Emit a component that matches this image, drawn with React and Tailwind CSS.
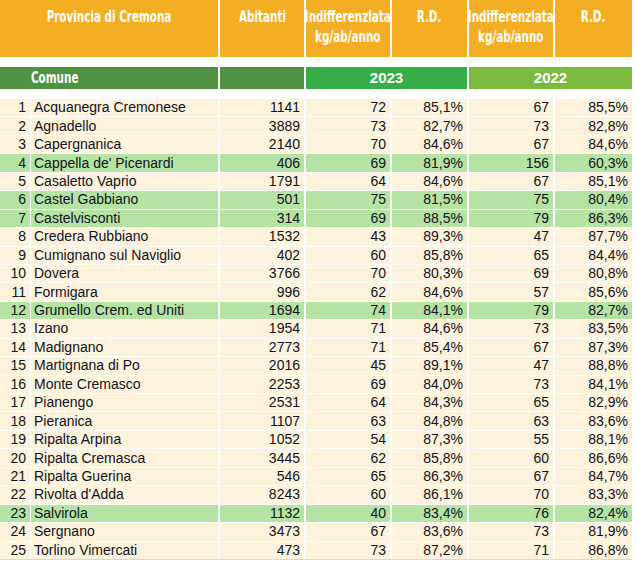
const ROWS = [
  [1, 'Acquanegra Cremonese', '1141', '72', '85,1%', '67', '85,5%'],
  [2, 'Agnadello', '3889', '73', '82,7%', '73', '82,8%'],
  [3, 'Capergnanica', '2140', '70', '84,6%', '67', '84,6%'],
  [4, "Cappella de' Picenardi", '406', '69', '81,9%', '156', '60,3%', true],
  [5, 'Casaletto Vaprio', '1791', '64', '84,6%', '67', '85,1%'],
  [6, 'Castel Gabbiano', '501', '75', '81,5%', '75', '80,4%', true],
  [7, 'Castelvisconti', '314', '69', '88,5%', '79', '86,3%', true],
  [8, 'Credera Rubbiano', '1532', '43', '89,3%', '47', '87,7%'],
  [9, 'Cumignano sul Naviglio', '402', '60', '85,8%', '65', '84,4%'],
  [10, 'Dovera', '3766', '70', '80,3%', '69', '80,8%'],
  [11, 'Formigara', '996', '62', '84,6%', '57', '85,6%'],
  [12, 'Grumello Crem. ed Uniti', '1694', '74', '84,1%', '79', '82,7%', true],
  [13, 'Izano', '1954', '71', '84,6%', '73', '83,5%'],
  [14, 'Madignano', '2773', '71', '85,4%', '67', '87,3%'],
  [15, 'Martignana di Po', '2016', '45', '89,1%', '47', '88,8%'],
  [16, 'Monte Cremasco', '2253', '69', '84,0%', '73', '84,1%'],
  [17, 'Pianengo', '2531', '64', '84,3%', '65', '82,9%'],
  [18, 'Pieranica', '1107', '63', '84,8%', '63', '83,6%'],
  [19, 'Ripalta Arpina', '1052', '54', '87,3%', '55', '88,1%'],
  [20, 'Ripalta Cremasca', '3445', '62', '85,8%', '60', '86,6%'],
  [21, 'Ripalta Guerina', '546', '65', '86,3%', '67', '84,7%'],
  [22, "Rivolta d'Adda", '8243', '60', '86,1%', '70', '83,3%'],
  [23, 'Salvirola', '1132', '40', '83,4%', '76', '82,4%', true],
  [24, 'Sergnano', '3473', '67', '83,6%', '73', '81,9%'],
  [25, 'Torlino Vimercati', '473', '73', '87,2%', '71', '86,8%'],
]

// no narrow face installed: squeeze the condensed bold a bit more
const narrow = "font-['Liberation_Sans_Narrow','DejaVu_Sans_Condensed',sans-serif] font-bold"

function HeadCell({ w, children }) {
  return (
    <div className={`${w} bg-[#f4ae24] text-white flex justify-center pt-[7px] text-[15px] leading-[20px] ${narrow}`}>
      <span className="inline-block text-center whitespace-nowrap scale-x-[0.77]">{children}</span>
    </div>
  )
}

function Row({ r }) {
  const [n, name, ab, i23, rd23, i22, rd22, hl] = r
  const bg = hl ? 'bg-[#b4e3a3]' : 'bg-[#fdf3dc]'
  const cell = `${bg} flex items-center justify-end pr-[4px]`
  return (
    <div className="flex h-[17.44px] gap-x-[2px]">
      <div className="flex w-[218px] gap-x-px">
        <div className={`${cell} w-[30px]`}>{n}</div>
        <div className={`${bg} flex items-center pl-[3px] flex-1 whitespace-nowrap`}>{name}</div>
      </div>
      <div className={`${cell} w-[84px]`}>{ab}</div>
      <div className={`${cell} w-[84px]`}>{i23}</div>
      <div className={`${cell} w-[75px]`}>{rd23}</div>
      <div className={`${cell} w-[84px]`}>{i22}</div>
      <div className={`${cell} w-[77px]`}>{rd22}</div>
    </div>
  )
}

export default function App() {
  return (
    <div className="w-[637px] h-[570px] bg-white overflow-hidden">
      <div className="w-[632px]">
        <div className="flex h-[57px] gap-x-[2px]">
          <HeadCell w="w-[218px]">Provincia di Cremona</HeadCell>
          <HeadCell w="w-[84px]">Abitanti</HeadCell>
          <HeadCell w="w-[84px]">Indifferenzlata<br />kg/ab/anno</HeadCell>
          <HeadCell w="w-[75px]">R.D.</HeadCell>
          <HeadCell w="w-[84px]">Indifferenzlata<br />kg/ab/anno</HeadCell>
          <HeadCell w="w-[77px]">R.D.</HeadCell>
        </div>

        <div className="flex h-[22px] mt-[10px] gap-x-[2px] text-white">
          <div className={`w-[218px] bg-[#4f9242] flex items-center pl-[31px] text-[15px] ${narrow}`}>
            <span className="inline-block origin-left scale-x-[0.77]">Comune</span>
          </div>
          <div className="w-[84px] bg-[#4f9242]" />
          <div className="w-[161px] bg-[#36ae48] flex items-center justify-center text-[15px] font-bold font-['Liberation_Sans',sans-serif]">2023</div>
          <div className="w-[163px] bg-[#7bba3e] flex items-center justify-center text-[15px] font-bold font-['Liberation_Sans',sans-serif]">2022</div>
        </div>

        <div className="mt-[10px] flex flex-col gap-y-px text-[14px] text-[#111122] font-['Liberation_Sans',Arial,sans-serif] border-b border-[#c6e8b8]">
          {ROWS.map(r => (
            <Row key={r[0]} r={r} />
          ))}
        </div>
      </div>
    </div>
  )
}
